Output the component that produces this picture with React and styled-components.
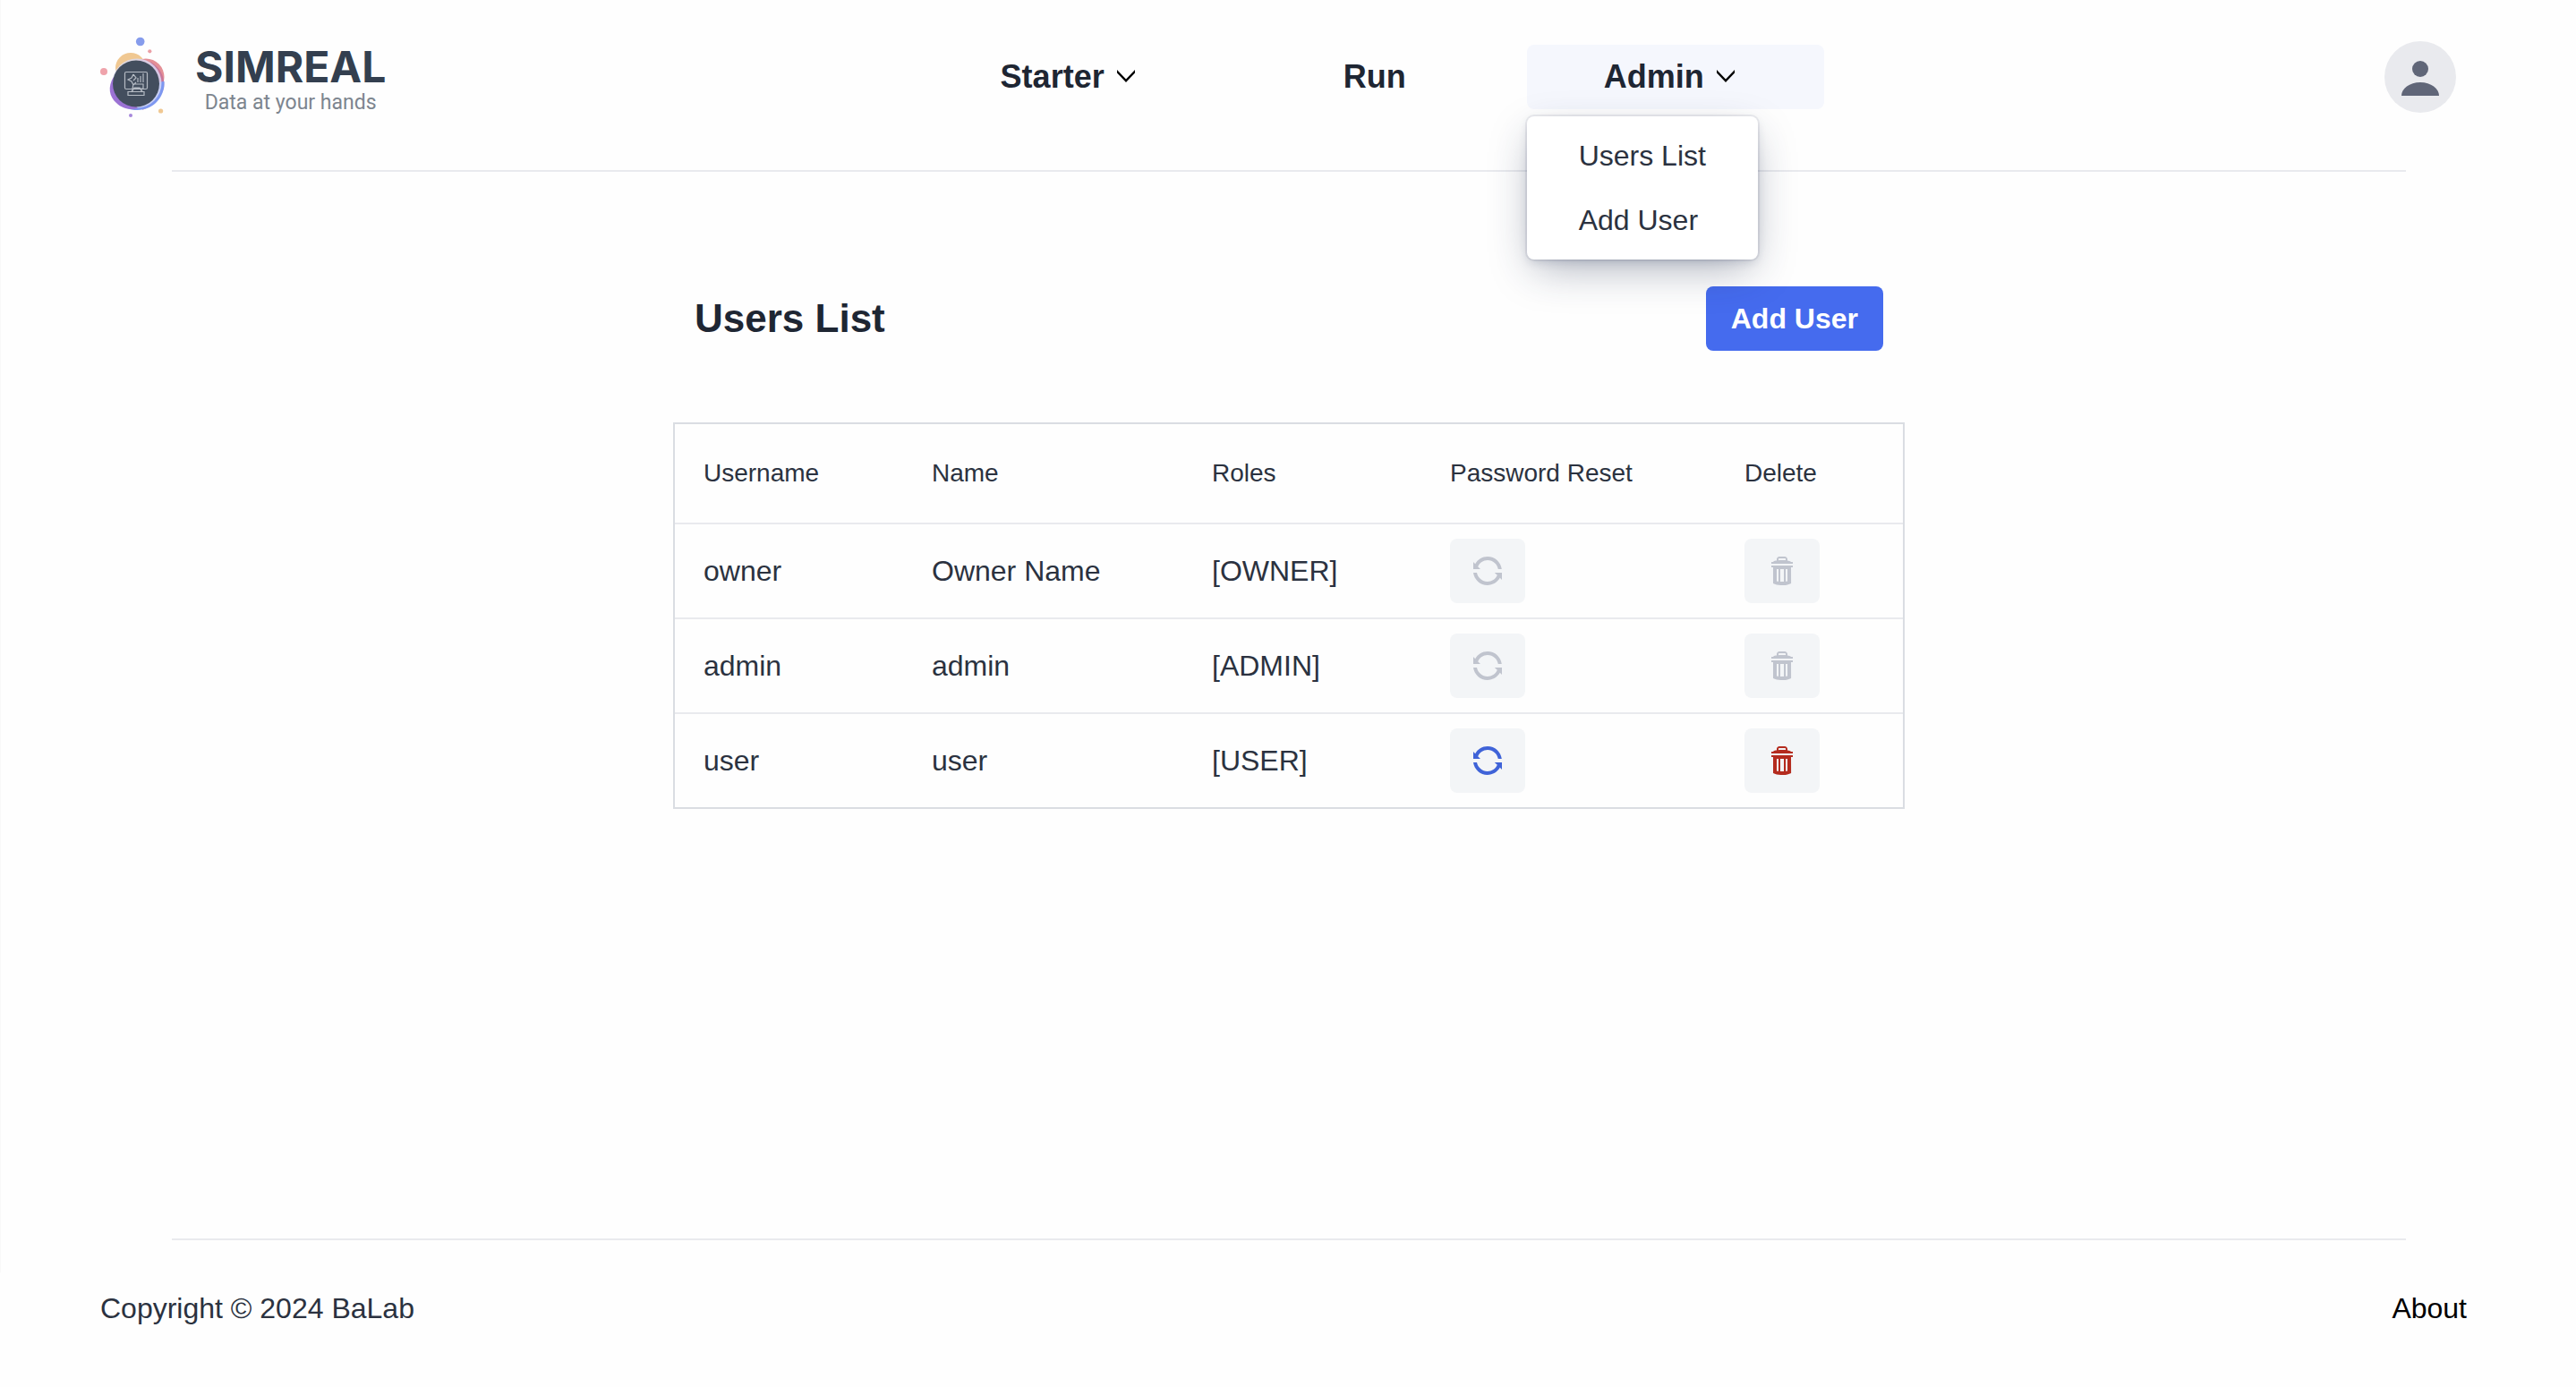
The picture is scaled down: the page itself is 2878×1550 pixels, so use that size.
import React from 'react';
import styled, { createGlobalStyle } from 'styled-components';

const GlobalStyle = createGlobalStyle`
  *, *::before, *::after { box-sizing: border-box; }
  body {
    margin: 0;
    background: #fefefe;
    color: #2b3240;
    font-family: "Liberation Sans", Arial, sans-serif;
    font-size: 32px;
    line-height: 52px;
  }
  button { font: inherit; color: inherit; border: 0; margin: 0; cursor: pointer; }
  button:disabled { cursor: default; }
  a { color: inherit; text-decoration: none; }
`;

const Page = styled.div`
  display: flex;
  flex-direction: column;
  min-height: 100vh;
  padding-left: 2px;
  background: linear-gradient(#f8f8f8, #f8f8f8) 0 0 / 1px calc(100% - 128px) no-repeat;
`;

const TopBar = styled.header`
  display: flex;
  align-items: center;
  justify-content: space-between;
  height: 172px;
  margin-bottom: 18px;
  padding: 0 110px;
`;

const Divider = styled.hr`
  height: 2px;
  margin: 0 190px;
  border: 0;
  background: #e9eaee;
`;

const Brand = styled.a`
  display: flex;
  align-items: center;
  gap: 34px;
`;

const BrandMark = styled.svg`
  width: 72px;
  height: 90px;
`;

const BrandText = styled.span`
  display: flex;
  flex-direction: column;
  align-items: center;
  padding-top: 6px;
`;

const BrandName = styled.span`
  color: #333f4f;
  font: 700 48px/52px Inter, sans-serif;
`;

const Tagline = styled.span`
  color: #7d858f;
  font: 400 23px/28px Roboto, sans-serif;
`;

const Nav = styled.nav`
  display: flex;
  gap: 4px;
`;

const NavCell = styled.div`
  position: relative;
`;

const NavButton = styled.button`
  display: flex;
  align-items: center;
  justify-content: center;
  gap: 4px;
  width: 332px;
  height: 72px;
  border-radius: 8px;
  background: ${({ $open }) => ($open ? '#f5f7fd' : 'transparent')};
  color: #1e2633;
  font-size: 36px;
  font-weight: 700;
`;

const Chevron = styled.svg`
  width: 40px;
  height: 40px;
  margin-right: 4px;
`;

const Menu = styled.div`
  position: absolute;
  top: 80px;
  left: 0;
  z-index: 2;
  width: 258px;
  padding: 8px;
  border-radius: 8px;
  background: #fff;
  box-shadow:
    0 0 0 2px hsla(225, 30%, 25%, 0.08),
    0 4px 12px -2px hsla(222, 45%, 23%, 0.18),
    0 16px 48px -8px hsla(222, 40%, 21%, 0.38);
`;

const MenuItem = styled.a`
  display: block;
  padding: 10px 0 10px 50px;
`;

const AvatarButton = styled.button`
  display: flex;
  padding: 0 24px;
  background: none;
`;

const AvatarIcon = styled.svg`
  width: 80px;
  height: 80px;
`;

const Main = styled.main`
  flex: 1;
  width: 1376px;
  max-width: 100%;
  margin: 0 auto;
  padding-top: 128px;
`;

const TitleBar = styled.div`
  display: flex;
  align-items: center;
  justify-content: space-between;
  margin-bottom: 80px;
  padding: 0 24px;
`;

const Title = styled.h2`
  margin: 0;
  color: #1e2633;
  font-size: 44px;
  font-weight: 700;
`;

const PrimaryButton = styled.button`
  height: 72px;
  padding: 0 28px;
  border-radius: 8px;
  background: #456bee;
  color: #fff;
  font-weight: 700;
`;

const GridTable = styled.table`
  width: 100%;
  table-layout: fixed;
  border: 2px solid #dadde2;
  border-collapse: separate;
  border-spacing: 0;
`;

const Col = styled.col`
  width: ${({ $width }) => $width};
`;

const HeadCell = styled.th`
  height: 110px;
  padding: 0 32px;
  font-size: 28px;
  font-weight: 400;
  text-align: left;
  white-space: nowrap;
`;

const Cell = styled.td`
  height: 106px;
  padding: 0 32px;
  border-top: 2px solid #e9eaee;
  white-space: nowrap;
`;

const IconButton = styled.button`
  display: flex;
  align-items: center;
  justify-content: center;
  width: 84px;
  height: 72px;
  border-radius: 8px;
  background: #f3f5f7;
  color: ${({ $tone }) => ($tone === 'danger' ? '#b42b1e' : '#3f63d8')};

  &:disabled { color: #c0c4ce; }

  svg { width: 32px; height: 32px; fill: currentColor; }
`;

const Footer = styled.footer`
  display: flex;
  align-items: center;
  justify-content: space-between;
  height: 164px;
  padding: 0 110px 12px;
`;

const FooterLink = styled.a`
  padding: 0 12px;
  color: #000;
`;

const users = [
  { username: 'owner', name: 'Owner Name', role: '[OWNER]', locked: true },
  { username: 'admin', name: 'admin', role: '[ADMIN]', locked: true },
  { username: 'user', name: 'user', role: '[USER]', locked: false },
];

function Logo() {
  return (
    <BrandMark viewBox="0 0 72 90" aria-hidden="true">
      <circle cx="44.700" cy="5.500" r="4.800" fill="#869cec" />
      <circle cx="55.300" cy="16.300" r="2.100" fill="#eba0a6" />
      <circle cx="4" cy="39" r="4" fill="#efa3ab" />
      <circle cx="67.600" cy="83" r="2.600" fill="#f0c892" />
      <circle cx="34" cy="88" r="2" fill="#a788db" />
      <circle cx="34" cy="35" r="17" fill="#f0c892" />
      <circle cx="51" cy="45" r="20.500" fill="#e48f96" />
      <path d="M56 28c11 6 17 18 15 30-4 12-12 20-24 24z" fill="#b8659b" opacity=".6" />
      <path d="M71.500 50c1 17-12 32-30 32-8 0-12-2-16-5l36-26z" fill="#7d97f0" />
      <circle cx="41" cy="52" r="27.500" fill="#d9dcf6" opacity=".8" />
      <path d="M15 45c-7 11-5 22 3 29 7 7 16 8 24 6L18 52z" fill="#9b72d4" />
      <circle cx="40" cy="52.500" r="26" fill="#434e5e" />
      <g fill="none" stroke="#b5bbc4" strokeWidth="1.200">
        <rect x="27.500" y="39.500" width="25" height="19" rx="1.500" />
        <path d="M37 59l-2 3M45 59l2 3M31 61.500h18v4H31zM35 61l3-4h6l3 4M37 53h11v5H36zM37 42l-2 4-4 2 4 2 2 4 3-3M37 42l3 4-3 3M42 51v-5M45 51v-7M48 51V41" />
      </g>
    </BrandMark>
  );
}

function ChevronDown() {
  return (
    <Chevron viewBox="0 0 40 40" aria-hidden="true">
      <path d="M10 12l10 10.400L30 12v3.600L20 26 10 15.600z" fill="#000" />
    </Chevron>
  );
}

function RefreshIcon() {
  return (
    <svg viewBox="0 0 16 16" aria-hidden="true">
      <path d="M2.600 5.600c0.900-2.100 3-3.600 5.400-3.600 3 0 5.400 2.200 5.900 5h2c-0.500-3.900-3.800-7-7.900-7-3 0-5.600 1.600-6.900 4.100l-1.100-1.100v4h4l-1.400-1.400z" />
      <path d="M16 9h-4.100l1.500 1.400c-0.900 2.100-3 3.600-5.500 3.600-2.900 0-5.400-2.200-5.900-5h-2c0.500 3.900 3.900 7 7.900 7 3 0 5.600-1.700 7-4.100l1.100 1.100v-4z" />
    </svg>
  );
}

function TrashIcon() {
  return (
    <svg viewBox="0 0 16 16" aria-hidden="true">
      <path d="M13 3s0-0.510-2-0.800v-0.700c-0.017-0.832-0.695-1.500-1.530-1.500h-3c-0.815 0.017-1.470 0.682-1.470 1.500v0.700c-1.765 0.068-2 0.800-2 0.800h-1v1h12v-1h-1zM6 1.500c0.005-0.274 0.226-0.495 0.499-0.500h3.001c0.282 0 0.513 0.220 0.529 0.499v0.561c-0.353-0.042-0.763-0.065-1.178-0.065-0.117 0-0.233 0.002-0.349 0.006-0.553 0-2.063 0-2.503 0.070v-0.570z" />
      <path d="M2 5v1h1v9c1.234 0.631 2.692 1 4.236 1h1.529c1.544 0 3.002-0.369 4.289-1.025l-0.054-8.975h1v-1h-12zM6 13.920q-0.510-0.060-1-0.170v-6.750h1v6.920zM9 14h-2v-7h2v7zM11 13.720c-0.267 0.070-0.606 0.136-0.950 0.184l-0.050-6.904h1v6.720z" />
    </svg>
  );
}

function UserRow({ user }) {
  return (
    <tr>
      <Cell>{user.username}</Cell>
      <Cell>{user.name}</Cell>
      <Cell>{user.role}</Cell>
      <Cell>
        <IconButton type="button" disabled={user.locked} aria-label={`Reset password of ${user.username}`}>
          <RefreshIcon />
        </IconButton>
      </Cell>
      <Cell>
        <IconButton type="button" $tone="danger" disabled={user.locked} aria-label={`Delete ${user.username}`}>
          <TrashIcon />
        </IconButton>
      </Cell>
    </tr>
  );
}

export default function App() {
  return (
    <>
      <GlobalStyle />
      <Page>
        <TopBar>
          <Brand href="#home">
            <Logo />
            <BrandText>
              <BrandName>SIMREAL</BrandName>
              <Tagline>Data at your hands</Tagline>
            </BrandText>
          </Brand>
          <Nav>
            <NavCell>
              <NavButton type="button">Starter<ChevronDown /></NavButton>
            </NavCell>
            <NavCell>
              <NavButton type="button">Run</NavButton>
            </NavCell>
            <NavCell>
              <NavButton type="button" $open aria-expanded="true">Admin<ChevronDown /></NavButton>
              <Menu>
                <MenuItem href="#users">Users List</MenuItem>
                <MenuItem href="#add">Add User</MenuItem>
              </Menu>
            </NavCell>
          </Nav>
          <AvatarButton type="button" aria-label="Account">
            <AvatarIcon viewBox="0 0 80 80" aria-hidden="true">
              <circle cx="40" cy="40" r="40" fill="#e9eaee" />
              <circle cx="40" cy="31" r="9" fill="#606678" />
              <path d="M19 61c0-8 9-15 21-15s21 7 21 15z" fill="#606678" />
            </AvatarIcon>
          </AvatarButton>
        </TopBar>
        <Divider />
        <Main>
          <TitleBar>
            <Title>Users List</Title>
            <PrimaryButton type="button">Add User</PrimaryButton>
          </TitleBar>
          <GridTable>
            <colgroup>
              <Col $width="255px" />
              <Col $width="313px" />
              <Col $width="266px" />
              <Col $width="329px" />
              <Col $width="auto" />
            </colgroup>
            <thead>
              <tr>
                <HeadCell scope="col">Username</HeadCell>
                <HeadCell scope="col">Name</HeadCell>
                <HeadCell scope="col">Roles</HeadCell>
                <HeadCell scope="col">Password Reset</HeadCell>
                <HeadCell scope="col">Delete</HeadCell>
              </tr>
            </thead>
            <tbody>
              {users.map((user) => <UserRow key={user.username} user={user} />)}
            </tbody>
          </GridTable>
        </Main>
        <Divider />
        <Footer>
          <span>Copyright © 2024 BaLab</span>
          <FooterLink href="#about">About</FooterLink>
        </Footer>
      </Page>
    </>
  );
}
